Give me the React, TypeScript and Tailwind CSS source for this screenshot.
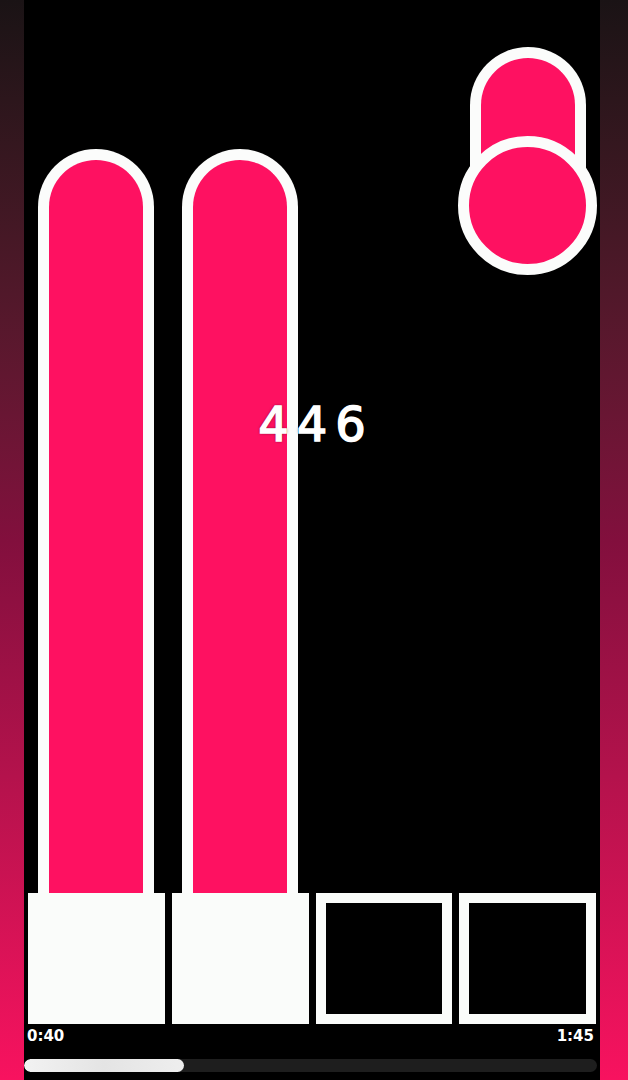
import React from 'react';

type Lane = { kind: 'hold' | 'note' | 'empty'; pressed: boolean };

const lanes: Lane[] = [
    { kind: 'hold', pressed: true },
    { kind: 'hold', pressed: true },
    { kind: 'empty', pressed: false },
    { kind: 'note', pressed: false },
];

const SideStrip: React.FC<{ width: string }> = ({ width }) => (
    <div className={`${width} h-full bg-gradient-to-b from-[#1a1315] via-[#820f3d] to-[#f8125f]`} />
);

const App: React.FC = () => {
    return (
        <div className="w-[628px] h-[1080px] flex bg-black overflow-hidden font-['DejaVu_Sans',sans-serif]">
            <SideStrip width="w-[24px]" />

            {/* Play field */}
            <div className="w-[576px] h-full flex flex-col bg-black relative">
                {/* Lanes */}
                <div className="h-[893px] grid grid-cols-4 gap-[7px] pl-[4px] pr-[4px]">
                    {lanes.map((lane, i) => (
                        <div key={i} className="flex flex-col items-center">
                            {lane.kind === 'hold' && (
                                <div className="mt-auto w-[116px] h-[744px] border-[11px] border-b-0 border-[#fbfcfb] bg-[#fe1161] rounded-t-full" />
                            )}
                            {lane.kind === 'note' && (
                                <div className="mt-[47px] flex flex-col items-center">
                                    <div className="w-[116px] h-[135px] border-[11px] border-b-0 border-[#fbfcfb] bg-[#fe1161] rounded-t-full" />
                                    <div className="-mt-[46px] w-[139px] h-[139px] rounded-full border-[11px] border-[#fbfcfb] bg-[#fe1161]" />
                                </div>
                            )}
                        </div>
                    ))}
                </div>

                {/* Combo counter */}
                <div className="absolute left-0 right-0 top-[396px] flex justify-center pointer-events-none">
                    <span className="text-[48px] leading-[56px] tracking-[8px] pl-[8px] text-white [-webkit-text-stroke:1.5px_white] [text-shadow:0_0_3px_rgba(0,0,0,0.8)]">
                        446
                    </span>
                </div>

                {/* Hit keys */}
                <div className="h-[131px] grid grid-cols-4 gap-[7px] pl-[4px] pr-[4px]">
                    {lanes.map((lane, i) => (
                        <div
                            key={i}
                            className={lane.pressed ? 'bg-[#fafcfa]' : 'border-[10px] border-[#fafcfa] bg-black'}
                        />
                    ))}
                </div>

                {/* Times */}
                <div className="h-[20px] flex items-center justify-between pl-[3px] pr-[6px] text-white text-[15px] font-bold leading-[20px] mt-[2px]">
                    <span>0:40</span>
                    <span>1:45</span>
                </div>

                {/* Progress */}
                <div className="mt-[13px] mr-[3px] h-[13px] rounded-full bg-[#1e1e1e] overflow-hidden flex">
                    <div className="w-[160px] h-full rounded-full bg-gradient-to-r from-[#f2f2f2] via-[#e4e4e4] to-[#eeeeee]" />
                </div>
            </div>

            <SideStrip width="w-[28px]" />
        </div>
    );
};

export default App;
